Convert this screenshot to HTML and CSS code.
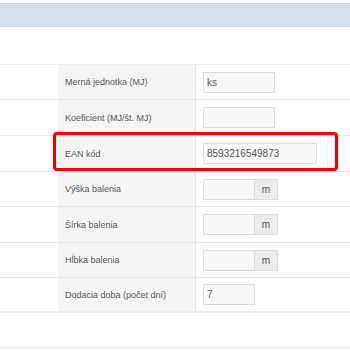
FILE: index.html
```html
<!DOCTYPE html>
<html lang="sk">
<head>
    <meta charset="UTF-8">
    <meta name="viewport" content="width=device-width, initial-scale=1.0">
    <title>Produkt - logistika</title>
    <link rel="stylesheet" href="styles.css">
</head>
<body>

    <div class="panel-head"></div> <!-- Hlavička panelu -->

    <div class="form-table">
        <div class="row">
            <div class="spacer"></div>
            <div class="label">Merná jednotka (MJ)</div>
            <div class="value"><input type="text" class="field" value="ks"></div>
        </div>
        <div class="row tall">
            <div class="spacer"></div>
            <div class="label">Koeficient (MJ/št. MJ)</div>
            <div class="value"><input type="text" class="field" value=""></div>
        </div>
        <div class="row tall highlighted">
            <div class="spacer"></div>
            <div class="label">EAN kód</div>
            <div class="value"><input type="text" class="field wide" value="8593216549873"></div>
            <div class="marker"></div> <!-- Červené zvýraznenie -->
        </div>
        <div class="row">
            <div class="spacer"></div>
            <div class="label">Výška balenia</div>
            <div class="value">
                <div class="input-group"><input type="text" class="field short" value=""><span class="addon">m</span></div>
            </div>
        </div>
        <div class="row tall">
            <div class="spacer"></div>
            <div class="label">Šírka balenia</div>
            <div class="value">
                <div class="input-group"><input type="text" class="field short" value=""><span class="addon">m</span></div>
            </div>
        </div>
        <div class="row">
            <div class="spacer"></div>
            <div class="label">Hĺbka balenia</div>
            <div class="value">
                <div class="input-group"><input type="text" class="field short" value=""><span class="addon">m</span></div>
            </div>
        </div>
        <div class="row last">
            <div class="spacer"></div>
            <div class="label">Dodacia doba (počet dní)</div>
            <div class="value"><input type="text" class="field short" value="7"></div>
        </div>
    </div>

    <div class="panel-foot"></div>

</body>
</html>
```

FILE: styles.css
```css
/* Základné štýly */
body {
    margin: 0;
    padding: 0;
    background-color: #fff;
    font-family: 'Liberation Sans', Arial, sans-serif;
    font-size: 9px;
    color: #555;
}

.panel-head {
    margin-top: 3px;
    height: 22px;
    background-color: #d7e0e8;
    border-top: 1px solid #cdd5dc;
    border-bottom: 1px solid #cdd5dc;
}

.form-table {
    margin-top: 37px;
    border-top: 1px solid #ececec;
}

.row {
    display: grid;
    grid-template-columns: 58px 138px 1fr;
    height: 34px;
    border-bottom: 1px solid #e6e6e6;
    position: relative;
}

.row.tall {
    height: 35px;
}

.row.last {
    border-bottom: 2px solid #ececec;
    height: 33px;
}

.label {
    display: flex;
    align-items: center;
    padding-left: 7px;
    background-color: #f5f5f5;
    border-right: 1px solid #e6e6e6;
}

.value {
    display: flex;
    align-items: center;
    padding-left: 7px;
}

.field {
    box-sizing: border-box;
    width: 72px;
    height: 21px;
    padding: 0 3px;
    font-family: 'Liberation Sans', Arial, sans-serif;
    font-size: 10px;
    color: #555;
    background-color: #f8f8f8;
    border: 1px solid #dcdcdc;
    border-radius: 0;
    outline: none;
}

.field.wide {
    width: 114px;
}

.field.short {
    width: 52px;
}

.input-group {
    display: flex;
}

.addon {
    box-sizing: border-box;
    width: 23px;
    height: 21px;
    display: flex;
    align-items: center;
    justify-content: center;
    font-size: 10px;
    background-color: #ececec;
    border: 1px solid #dcdcdc;
    border-left: none;
}

/* Červený rámček okolo riadku EAN */
.marker {
    position: absolute;
    left: 53px;
    top: -4px;
    width: 285px;
    height: 39px;
    box-sizing: border-box;
    border: 3px solid #f20000;
    border-radius: 4px;
}

.panel-foot {
    margin-top: 34px;
    border-top: 1px solid #ececec;
}
```
